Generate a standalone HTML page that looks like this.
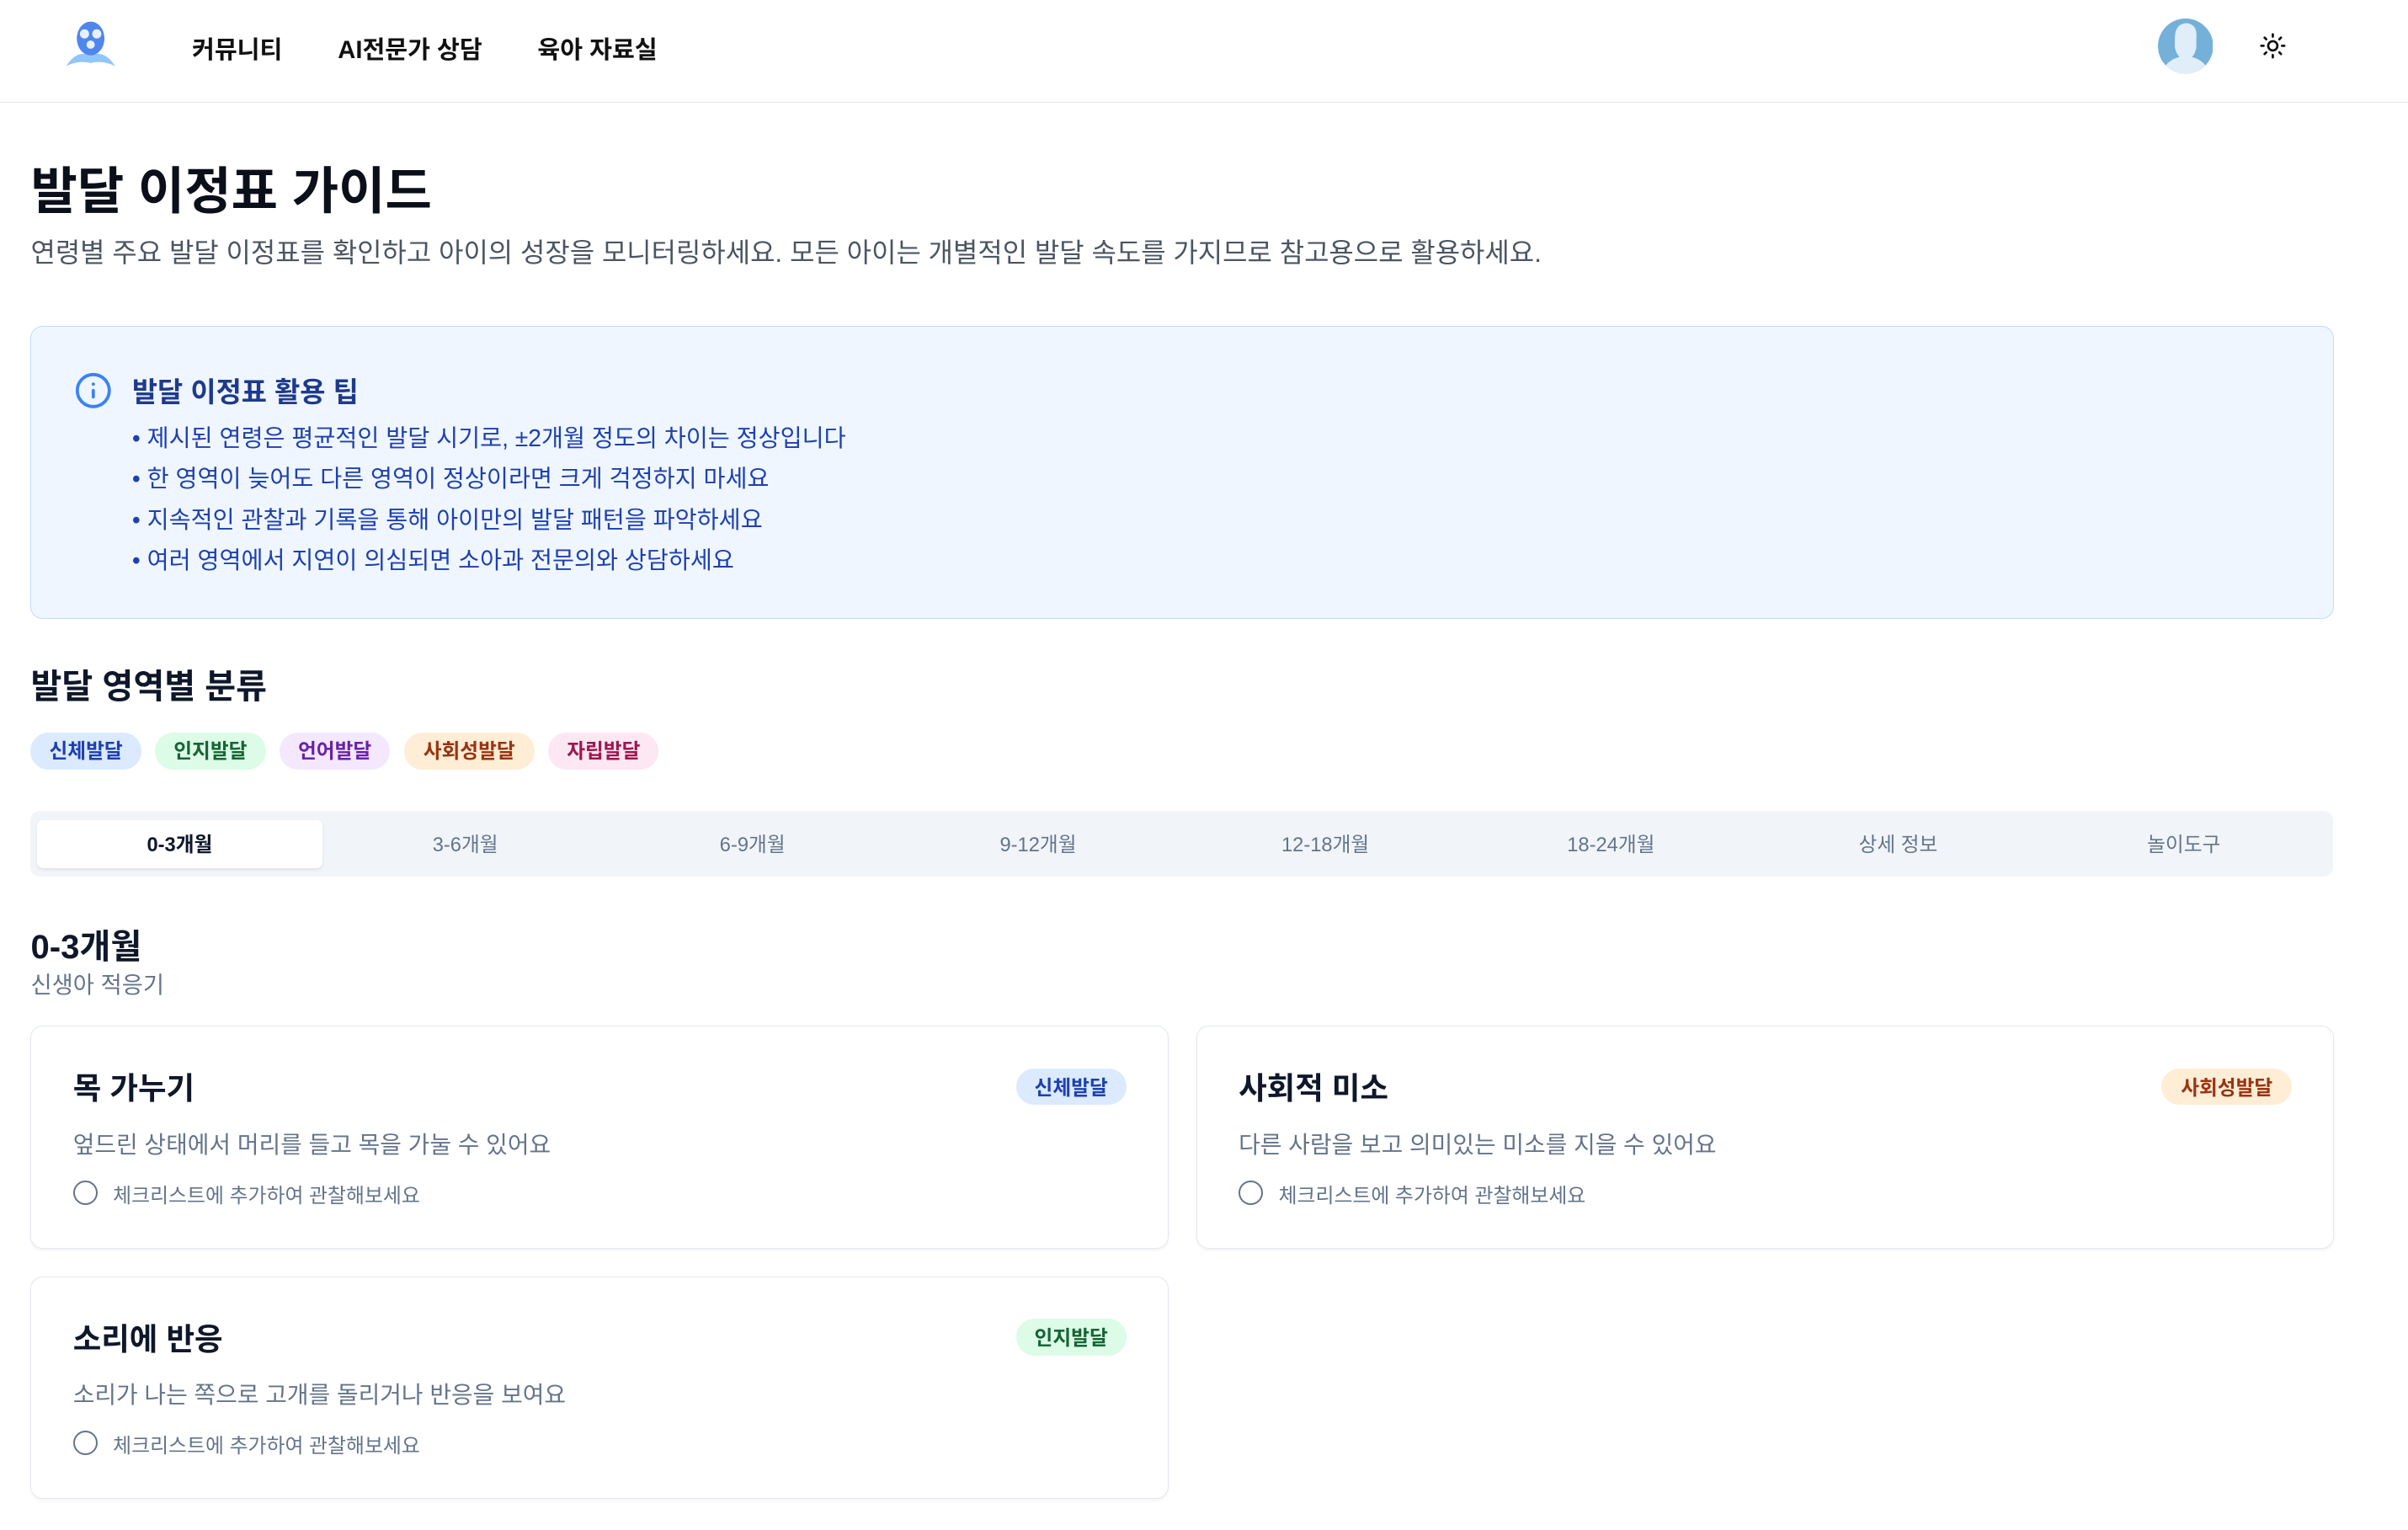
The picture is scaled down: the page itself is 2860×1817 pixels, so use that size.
<!DOCTYPE html>
<html><head><meta charset="utf-8"><style>
html{zoom:1.824}
*{box-sizing:border-box;margin:0;padding:0}
body{width:1568px;height:996px;overflow:hidden;background:#fff;font-family:"Liberation Sans","Noto Sans CJK KR",sans-serif;color:#0f172a;position:relative}
.a{position:absolute}
nav{position:absolute;left:0;top:0;width:1568px;height:67px;border-bottom:1px solid #e5e7eb}
.ni{position:absolute;top:20px;font-size:16px;font-weight:600;color:#111}
.chip{position:absolute;top:477px;height:24px;border-radius:12px;font-size:13px;font-weight:700;line-height:26px;text-align:center}
.tabs{left:20px;top:528px;width:1499px;height:43px;background:#f1f5f9;border-radius:6px}
.tab{position:absolute;top:6px;width:186px;height:31px;line-height:33px;text-align:center;font-size:13px;color:#64748b}
.card{position:absolute;width:741px;height:145px;border:1px solid #e2e8f0;border-radius:8px;box-shadow:0 1px 2px rgba(0,0,0,.05)}
.card h3{position:absolute;left:27px;top:24px;font-size:20px;font-weight:700}
.card p{position:absolute;left:27px;top:65px;font-size:15.3px;color:#64748b}
.card .cb{position:absolute;left:27px;top:100px;width:16px;height:16px;border:1.5px solid #64748b;border-radius:50%}
.card .ct{position:absolute;left:53px;top:99px;font-size:13.1px;color:#64748b}
.card .bd{position:absolute;right:27px;top:27px;width:72px;height:24px;border-radius:12px;font-size:13px;font-weight:700;line-height:27px;text-align:center}
</style></head><body>
<nav>
<svg class="a" style="left:40px;top:12px" width="38" height="34" viewBox="0 0 38 34">
<path d="M3 31 Q10 20 19 24 Q28 20 35 31 Q27 27 19 29 Q11 27 3 31Z" fill="#93c5fd"/>
<ellipse cx="19" cy="13" rx="9" ry="11" fill="#4f86ed"/>
<circle cx="15" cy="10" r="3" fill="#e8effd"/><circle cx="23" cy="10" r="3" fill="#e8effd"/><circle cx="19" cy="17" r="2.7" fill="#e8effd"/>
</svg>
<div class="ni" style="left:125px">커뮤니티</div>
<div class="ni" style="left:220px">AI전문가 상담</div>
<div class="ni" style="left:350px">육아 자료실</div>
<svg class="a" style="left:1405px;top:12px" width="36" height="36" viewBox="0 0 36 36">
<defs><clipPath id="c"><circle cx="18" cy="18" r="18"/></clipPath></defs>
<circle cx="18" cy="18" r="18" fill="#74b0d8"/>
<g clip-path="url(#c)"><path d="M11 13 Q11 3 19 3 Q26 4 25 13 L25 19 Q24 24 22 25 Q30 27 33 34 L33 40 L3 40 L3 34 Q6 27 14 25 Q12 23 11 19 Z" fill="#dfeef8"/></g>
</svg>
<svg class="a" style="left:1471px;top:21px" width="18" height="18" viewBox="0 0 24 24" fill="none" stroke="#111" stroke-width="2" stroke-linecap="round"><circle cx="12" cy="12" r="4"/><path d="M12 2v2M12 20v2M4.9 4.9l1.4 1.4M17.7 17.7l1.4 1.4M2 12h2M20 12h2M4.9 19.1l1.4-1.4M17.7 6.3l1.4-1.4"/></svg>
</nav>
<div class="a" style="left:20px;top:98px;font-size:33px;font-weight:700;color:#0b0f19">발달 이정표 가이드</div>
<div class="a" style="left:20px;top:151px;font-size:17.5px;color:#4b5563">연령별 주요 발달 이정표를 확인하고 아이의 성장을 모니터링하세요. 모든 아이는 개별적인 발달 속도를 가지므로 참고용으로 활용하세요.</div>
<div class="a" style="left:20px;top:212px;width:1500px;height:191px;background:#eff6ff;border:1px solid #bfdbfe;border-radius:8px"></div>
<svg class="a" style="left:48px;top:242px" width="25" height="25" viewBox="0 0 24 24" fill="none" stroke="#3b82f6" stroke-width="2" stroke-linecap="round"><circle cx="12" cy="12" r="10"/><path d="M12 16v-4M12 8h.01"/></svg>
<div class="a" style="left:86px;top:241px;font-size:18px;font-weight:700;color:#1e3a8a">발달 이정표 활용 팁</div>
<div class="a" style="left:86px;top:272px;font-size:15.5px;color:#1e40af;line-height:26.5px">• 제시된 연령은 평균적인 발달 시기로, ±2개월 정도의 차이는 정상입니다<br>• 한 영역이 늦어도 다른 영역이 정상이라면 크게 걱정하지 마세요<br>• 지속적인 관찰과 기록을 통해 아이만의 발달 패턴을 파악하세요<br>• 여러 영역에서 지연이 의심되면 소아과 전문의와 상담하세요</div>
<div class="a" style="left:20px;top:429px;font-size:22px;font-weight:700">발달 영역별 분류</div>
<div class="chip" style="left:20px;width:72px;background:#dbeafe;color:#1e40af">신체발달</div>
<div class="chip" style="left:101px;width:72px;background:#dcfce7;color:#166534">인지발달</div>
<div class="chip" style="left:182px;width:72px;background:#f3e8ff;color:#6b21a8">언어발달</div>
<div class="chip" style="left:263px;width:85px;background:#ffedd5;color:#9a3412">사회성발달</div>
<div class="chip" style="left:357px;width:72px;background:#fce7f3;color:#9d174d">자립발달</div>
<div class="a tabs">
<div class="tab" style="left:4px;background:#fff;color:#0f172a;font-weight:600;border-radius:4px;box-shadow:0 1px 2px rgba(0,0,0,.08)">0-3개월</div>
<div class="tab" style="left:190px">3-6개월</div>
<div class="tab" style="left:377px">6-9개월</div>
<div class="tab" style="left:563px">9-12개월</div>
<div class="tab" style="left:750px">12-18개월</div>
<div class="tab" style="left:936px">18-24개월</div>
<div class="tab" style="left:1123px">상세 정보</div>
<div class="tab" style="left:1309px">놀이도구</div>
</div>
<div class="a" style="left:20px;top:598px;font-size:22px;font-weight:700">0-3개월</div>
<div class="a" style="left:20px;top:629px;font-size:15px;color:#64748b">신생아 적응기</div>
<div class="card" style="left:20px;top:668px"><h3>목 가누기</h3><div class="bd" style="background:#dbeafe;color:#1e40af">신체발달</div><p>엎드린 상태에서 머리를 들고 목을 가눌 수 있어요</p><div class="cb"></div><div class="ct">체크리스트에 추가하여 관찰해보세요</div></div>
<div class="card" style="left:779px;top:668px"><h3>사회적 미소</h3><div class="bd" style="width:85px;background:#ffedd5;color:#9a3412">사회성발달</div><p>다른 사람을 보고 의미있는 미소를 지을 수 있어요</p><div class="cb"></div><div class="ct">체크리스트에 추가하여 관찰해보세요</div></div>
<div class="card" style="left:20px;top:831px"><h3>소리에 반응</h3><div class="bd" style="background:#dcfce7;color:#166534">인지발달</div><p>소리가 나는 쪽으로 고개를 돌리거나 반응을 보여요</p><div class="cb"></div><div class="ct">체크리스트에 추가하여 관찰해보세요</div></div>
</body></html>
